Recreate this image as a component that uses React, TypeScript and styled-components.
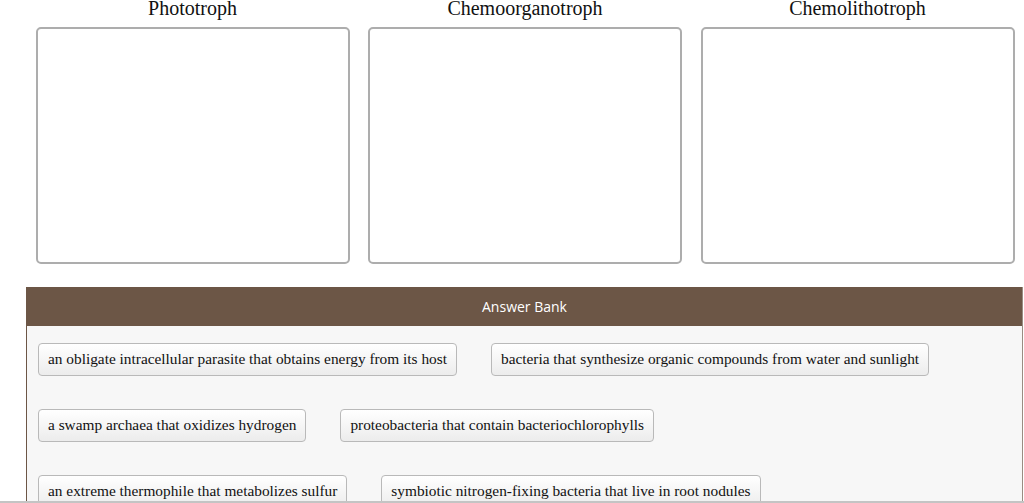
import styled, { createGlobalStyle } from 'styled-components';

const GlobalStyle = createGlobalStyle`
  html, body {
    margin: 0;
    padding: 0;
    background: #ffffff;
  }
  * {
    box-sizing: border-box;
  }
`;

export const Page = styled.div`
  height: 503px;
  overflow: hidden;
  display: flex;
  flex-direction: column;
  border-bottom: 2px solid #c4c4c4;
  font-family: 'Liberation Serif', 'Times New Roman', serif;
  color: #111;
`;

export const BinGrid = styled.div`
  display: grid;
  grid-template-columns: repeat(3, 314px);
  column-gap: 18.5px;
  padding: 0 9px 0 35.5px;
  margin-top: -2px;
`;

export const Bin = styled.section`
  display: flex;
  flex-direction: column;
  align-items: stretch;
`;

export const BinTitle = styled.h2`
  margin: 0;
  height: 29px;
  font-size: 20px;
  font-weight: normal;
  line-height: 20px;
  text-align: center;
`;

export const DropZone = styled.div`
  height: 237px;
  border: 2px solid #adadad;
  border-radius: 5px;
  background: #fff;
`;

export const Bank = styled.div`
  margin: 23px 1px 0 26px;
  flex: 1;
  border-left: 1px solid #6c5646;
  border-right: 1px solid #9a8c82;
  background: #f7f7f7;
`;

export const BankHeader = styled.div`
  height: 39px;
  display: flex;
  align-items: center;
  justify-content: center;
  background: #6c5646;
  color: #fff;
  font-family: 'Open Sans', 'Noto Sans', sans-serif;
  font-size: 14px;
`;

export const BankBody = styled.div`
  display: flex;
  flex-direction: column;
  gap: 33px;
  padding: 17px 11px 0;
`;

export const ChipRow = styled.div`
  display: flex;
  gap: 34px;
`;

export const Chip = styled.button`
  height: 33px;
  padding: 0 9px 2px;
  border: 1px solid #b9b9b9;
  border-radius: 4px;
  background: linear-gradient(#ffffff, #ececec);
  font-family: 'Liberation Serif', 'Times New Roman', serif;
  font-size: 15.35px;
  color: #111;
  white-space: nowrap;
  cursor: grab;
`;

const bins = ['Phototroph', 'Chemoorganotroph', 'Chemolithotroph'];

const rows = [
  [
    'an obligate intracellular parasite that obtains energy from its host',
    'bacteria that synthesize organic compounds from water and sunlight',
  ],
  ['a swamp archaea that oxidizes hydrogen', 'proteobacteria that contain bacteriochlorophylls'],
  [
    'an extreme thermophile that metabolizes sulfur',
    'symbiotic nitrogen-fixing bacteria that live in root nodules',
  ],
];

export default function App() {
  return (
    <>
      <GlobalStyle />
      <Page>
        <BinGrid>
          {bins.map((name) => (
            <Bin key={name}>
              <BinTitle>{name}</BinTitle>
              <DropZone />
            </Bin>
          ))}
        </BinGrid>

        <Bank>
          <BankHeader>Answer Bank</BankHeader>
          <BankBody>
            {rows.map((row, i) => (
              <ChipRow key={i}>
                {row.map((text) => (
                  <Chip key={text}>{text}</Chip>
                ))}
              </ChipRow>
            ))}
          </BankBody>
        </Bank>
      </Page>
    </>
  );
}
